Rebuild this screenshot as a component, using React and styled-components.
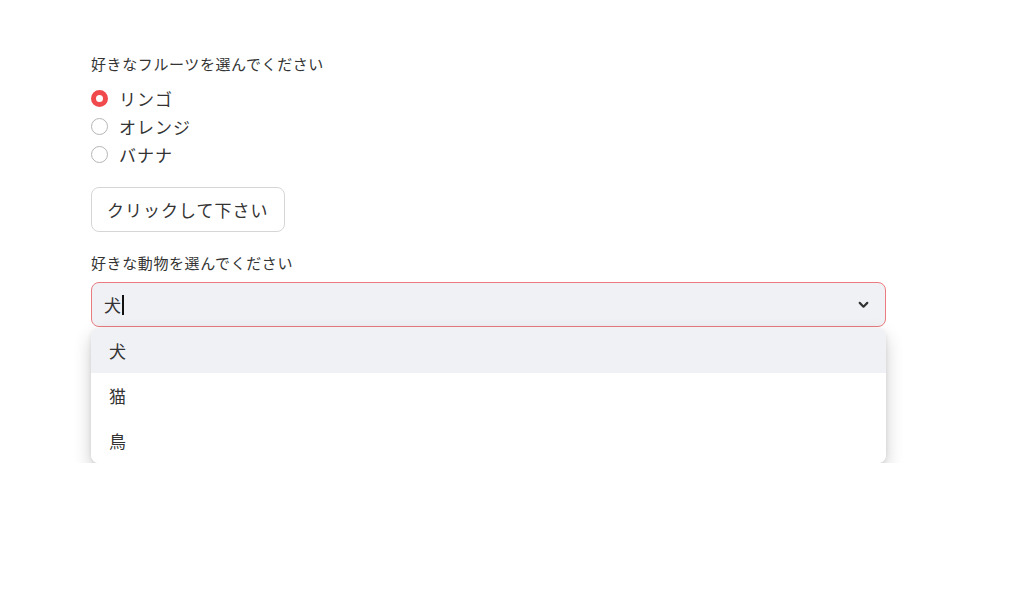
import styled, { createGlobalStyle } from "styled-components";
import { useState } from "react";

const fruits = ["リンゴ", "オレンジ", "バナナ"];
const animals = ["犬", "猫", "鳥"];

function App() {
  const [fruit, setFruit] = useState("リンゴ");
  const [animal, setAnimal] = useState("犬");

  return (
    <Container>
      <GlobalStyle />
      <Label>好きなフルーツを選んでください</Label>
      <RadioGroup>
        {fruits.map((f) => (
          <RadioRow key={f} onClick={() => setFruit(f)}>
            <RadioDot checked={fruit === f} />
            <RadioText>{f}</RadioText>
          </RadioRow>
        ))}
      </RadioGroup>
      <Button>クリックして下さい</Button>
      <Label>好きな動物を選んでください</Label>
      <SelectWrap>
        <SelectBox>
          <SelectValue>
            {animal}
            <Caret />
          </SelectValue>
          <svg width="13" height="13" viewBox="0 0 24 24" fill="none" stroke="#333" strokeWidth="4" strokeLinecap="round" strokeLinejoin="round">
            <path d="M5 9l7 7 7-7" />
          </svg>
        </SelectBox>
        <Menu>
          {animals.map((a, i) => (
            <Option key={a} active={i === 0} onClick={() => setAnimal(a)}>
              {a}
            </Option>
          ))}
        </Menu>
      </SelectWrap>
    </Container>
  );
}

const GlobalStyle = createGlobalStyle`
  body {
    margin: 0;
    background: #ffffff;
    font-family: "Noto Sans CJK JP", "Noto Sans", sans-serif;
    color: #333;
  }
`;

const Container = styled.div`
  width: 795px;
  padding: 53px 0 0 91px;
  display: flex;
  flex-direction: column;
  align-items: flex-start;
`;
const Label = styled.div`
  font-size: 15px;
  letter-spacing: 0.6px;
  line-height: 22px;
  color: #333;
`;
const RadioGroup = styled.div`
  display: flex;
  flex-direction: column;
  margin-top: 9px;
`;
const RadioRow = styled.label`
  display: flex;
  align-items: center;
  height: 28px;
  cursor: pointer;
`;
const RadioDot = styled.span`
  width: 17px;
  height: 17px;
  box-sizing: border-box;
  border-radius: 50%;
  border: ${(p) => (p.checked ? "5px solid #f04a4d" : "1.5px solid #b5b5b5")};
  background: #fff;
  margin-right: 11px;
`;
const RadioText = styled.span`
  font-size: 17px;
  letter-spacing: 1px;
  color: #333;
`;
const Button = styled.button`
  margin-top: 19px;
  margin-bottom: 20px;
  height: 45px;
  padding: 0 15px;
  border: 1px solid #d6d6d6;
  border-radius: 8px;
  background: #fff;
  font-family: inherit;
  font-size: 17px;
  letter-spacing: 1px;
  color: #333;
  cursor: pointer;
`;
const SelectWrap = styled.div`
  width: 100%;
  margin-top: 8px;
  display: flex;
  flex-direction: column;
  gap: 1px;
`;
const SelectBox = styled.div`
  height: 45px;
  box-sizing: border-box;
  border: 1px solid #ea7c7f;
  border-radius: 8px;
  background: #f0f1f5;
  display: flex;
  align-items: center;
  justify-content: space-between;
  padding: 0 15px 0 12px;
`;
const SelectValue = styled.span`
  display: flex;
  align-items: center;
  font-size: 17px;
  color: #333;
`;
const Caret = styled.span`
  width: 2px;
  height: 20px;
  background: #111;
  margin-left: 1px;
`;
const Menu = styled.div`
  background: #fff;
  border-radius: 8px;
  overflow: hidden;
  box-shadow: 0 8px 18px rgba(0, 0, 0, 0.2), 0 1px 4px rgba(0, 0, 0, 0.08);
`;
const Option = styled.div`
  height: 45px;
  display: flex;
  align-items: center;
  padding-left: 18px;
  font-size: 17px;
  color: #333;
  background: ${(p) => (p.active ? "#f0f1f5" : "#fff")};
  cursor: pointer;
`;

export default App;
